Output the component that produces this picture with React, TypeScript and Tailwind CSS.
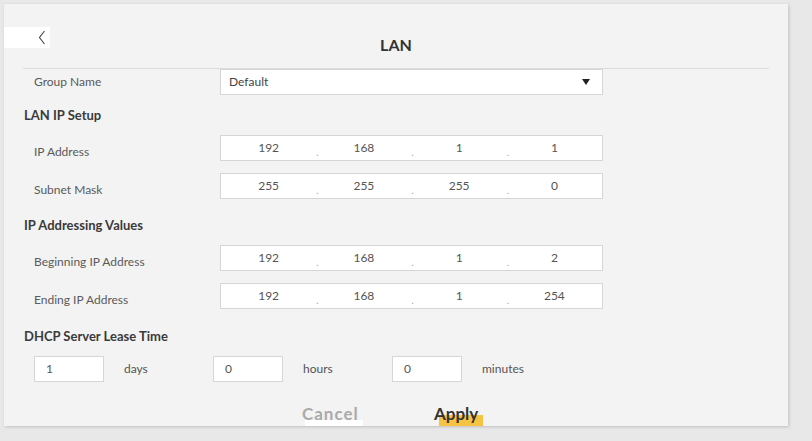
import { ReactNode } from "react";

const font = { fontFamily: "Lato, 'Open Sans', sans-serif" };

const ipRows = [
  { section: "LAN IP Setup", rows: [
    { label: "IP Address", octets: ["192", "168", "1", "1"] },
    { label: "Subnet Mask", octets: ["255", "255", "255", "0"] },
  ] },
  { section: "IP Addressing Values", rows: [
    { label: "Beginning IP Address", octets: ["192", "168", "1", "2"] },
    { label: "Ending IP Address", octets: ["192", "168", "1", "254"] },
  ] },
];

function Heading({ children, className = "" }: { children: ReactNode; className?: string }) {
  return (
    <h3 className={`pl-[1px] text-[13px] font-bold leading-[16px] text-[#3a3a3a] ${className}`}>
      {children}
    </h3>
  );
}

function IpInput({ octets }: { octets: string[] }) {
  return (
    <div className="flex h-[26px] w-[383px] items-center border border-[#d6d6d6] bg-white">
      {octets.map((o, i) => (
        <div key={i} className="flex flex-1 items-center">
          <span className="flex-1 text-center text-[12px] text-[#555]">{o}</span>
          {i < 3 && (
            <span className="relative top-[4px] w-0 text-[9px] leading-none text-[#999]">.</span>
          )}
        </div>
      ))}
    </div>
  );
}

export default function App() {
  return (
    <div className="h-[441px] w-[812px] overflow-hidden bg-[#e8e8e8] pl-[4px] pt-[4px]" style={font}>
      <div className="h-[422px] w-[784px] overflow-hidden bg-[#f3f3f3] shadow-[1px_1px_3px_rgba(0,0,0,0.18)]">
        {/* header */}
        <div className="grid h-[64px] grid-cols-[46px_1fr_46px] items-start pt-[23px]">
          <button className="flex h-[21px] items-center justify-end bg-white pr-[4px]">
            <svg width="8" height="15" viewBox="0 0 8 15" fill="none">
              <path d="M6.5 1 L1.5 7.5 L6.5 14" stroke="#444" strokeWidth="1.1" />
            </svg>
          </button>
          <h1 className="mt-[10px] text-center text-[16px] font-bold leading-[16px] text-[#333]">LAN</h1>
          <div />
        </div>

        <div className="mx-[19px] border-t border-[#dcdcdc]">
          {/* group name */}
          <div className="grid grid-cols-[197px_383px] items-center">
            <span className="pl-[11px] text-[12px] text-[#5a5a5a]">Group Name</span>
            <div className="flex h-[26px] items-center justify-between border border-[#d6d6d6] bg-white pl-[8px] pr-[12px]">
              <span className="text-[12px] text-[#444]">Default</span>
              <svg width="8" height="6" viewBox="0 0 8 6">
                <path d="M0 0 H8 L4 6 Z" fill="#222" />
              </svg>
            </div>
          </div>

          {ipRows.map((sec, si) => (
            <div key={sec.section}>
              <Heading className={si === 0 ? "mt-[12px]" : "mt-[18px]"}>{sec.section}</Heading>
              {sec.rows.map((r) => (
                <div key={r.label} className="mt-[12px] grid grid-cols-[197px_383px] items-center">
                  <span className="relative top-[4px] pl-[11px] text-[12px] text-[#5a5a5a]">{r.label}</span>
                  <IpInput octets={r.octets} />
                </div>
              ))}
            </div>
          ))}

          <Heading className="mt-[19px]">DHCP Server Lease Time</Heading>
          <div className="mt-[12px] flex pl-[11px]">
            {[
              ["1", "days"],
              ["0", "hours"],
              ["0", "minutes"],
            ].map(([v, unit]) => (
              <div key={unit} className="flex w-[179px] items-center">
                <div className="flex h-[26px] w-[70px] items-center border border-[#d6d6d6] bg-white pl-[11px] text-[12px] text-[#555]">
                  {v}
                </div>
                <span className="ml-[20px] text-[12px] text-[#555]">{unit}</span>
              </div>
            ))}
          </div>
        </div>

        {/* buttons */}
        <div className="mt-[20px] flex gap-[72px] pl-[298px]">
          <button className="relative h-[24px] w-[60px] text-left">
            <span className="absolute bottom-0 left-[3px] h-[6px] w-[58px] bg-white" />
            <span className="relative text-[17px] font-bold leading-[20px] tracking-[1px] text-[#aaa]">Cancel</span>
          </button>
          <button className="relative h-[24px] w-[50px] text-left">
            <span className="absolute bottom-0 left-[5px] h-[11px] w-[44px] bg-[#f7c342]" />
            <span className="relative text-[17px] font-bold leading-[20px] text-[#333]">Apply</span>
          </button>
        </div>
      </div>
    </div>
  );
}
